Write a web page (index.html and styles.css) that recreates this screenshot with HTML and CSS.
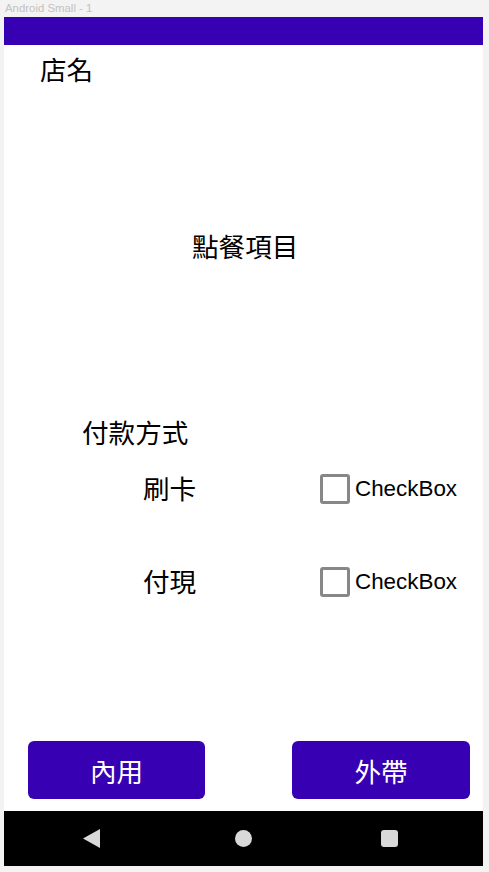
FILE: index.html
```html
<!DOCTYPE html>
<html lang="zh-Hant">
<head>
<meta charset="utf-8">
<title>Android Small - 1</title>
<link rel="stylesheet" href="styles.css">
</head>
<body>
<div class="frame-title">Android Small - 1</div>
<div class="phone">
  <div class="statusbar"></div>
  <div class="content">
    <div class="txt shop">店名</div>
    <div class="txt menu">點餐項目</div>
    <div class="txt pay-title">付款方式</div>
    <div class="row row-first">
      <div class="txt label">刷卡</div>
      <div class="check"><span class="box"></span><span class="check-text">CheckBox</span></div>
    </div>
    <div class="row row-second">
      <div class="txt label">付現</div>
      <div class="check"><span class="box"></span><span class="check-text">CheckBox</span></div>
    </div>
    <div class="buttons">
      <div class="btn btn-left">內用</div>
      <div class="btn btn-right">外帶</div>
    </div>
  </div>
  <div class="navbar">
    <svg class="nav-back" width="17" height="19" viewBox="0 0 17 19"><polygon points="17,0 17,19 0,9.5" fill="#d9d9d9"/></svg>
    <svg class="nav-home" width="17" height="17" viewBox="0 0 17 17"><circle cx="8.5" cy="8.5" r="8.5" fill="#d9d9d9"/></svg>
    <svg class="nav-recent" width="17" height="17" viewBox="0 0 17 17"><rect x="0" y="0" width="17" height="17" rx="3" fill="#d9d9d9"/></svg>
  </div>
</div>
</body>
</html>
```
FILE: styles.css
```css
html, body {
  margin: 0;
  padding: 0;
}
body {
  background: #f3f3f3;
  width: 489px;
  height: 872px;
  overflow: hidden;
}
.frame-title {
  height: 17px;
  line-height: 17px;
  padding-left: 5px;
  font-family: "Liberation Sans", Arial, sans-serif;
  font-size: 11.4px;
  color: #c2c2c2;
}
.phone {
  margin-left: 4px;
  width: 479px;
  height: 849px;
  background: #ffffff;
  display: flex;
  flex-direction: column;
}
.statusbar {
  height: 28px;
  background: #3700b3;
  flex: none;
}
.content {
  flex: 1;
  display: flex;
  flex-direction: column;
  align-items: flex-start;
}
.txt {
  font-family: "Noto Sans CJK TC", "Noto Sans CJK SC", sans-serif;
  font-size: 26.6px;
  line-height: 26.6px;
  color: #000;
  white-space: nowrap;
}
.shop {
  margin: 11px 0 0 36px;
}
.menu {
  margin: 150px 0 0 188px;
}
.pay-title {
  margin: 160px 0 0 78px;
}
.row {
  display: flex;
  align-items: center;
  height: 30px;
  padding-left: 139px;
}
.row-first {
  margin-top: 28px;
}
.row-second {
  margin-top: 63px;
}
.label {
  width: 177px;
}
.check {
  display: flex;
  align-items: center;
}
.box {
  width: 24px;
  height: 24px;
  border: 3px solid #878787;
  border-radius: 3px;
}
.check-text {
  margin-left: 5px;
  font-family: "Liberation Sans", Arial, sans-serif;
  font-size: 22.4px;
  color: #000;
}
.buttons {
  margin-top: auto;
  margin-bottom: 12px;
  align-self: stretch;
  display: flex;
  justify-content: space-between;
  padding: 0 13px 0 24px;
}
.btn {
  height: 58px;
  border-radius: 6px;
  background: #3700b3;
  color: #ffffff;
  display: flex;
  align-items: center;
  justify-content: center;
  font-family: "Noto Sans CJK TC", "Noto Sans CJK SC", sans-serif;
  font-size: 26.6px;
}
.btn-left {
  width: 177px;
}
.btn-right {
  width: 178px;
}
.navbar {
  flex: none;
  height: 55px;
  background: #000;
  display: flex;
  align-items: center;
}
.nav-back {
  margin-left: 79px;
}
.nav-home {
  margin-left: 135px;
}
.nav-recent {
  margin-left: 129px;
}
```
